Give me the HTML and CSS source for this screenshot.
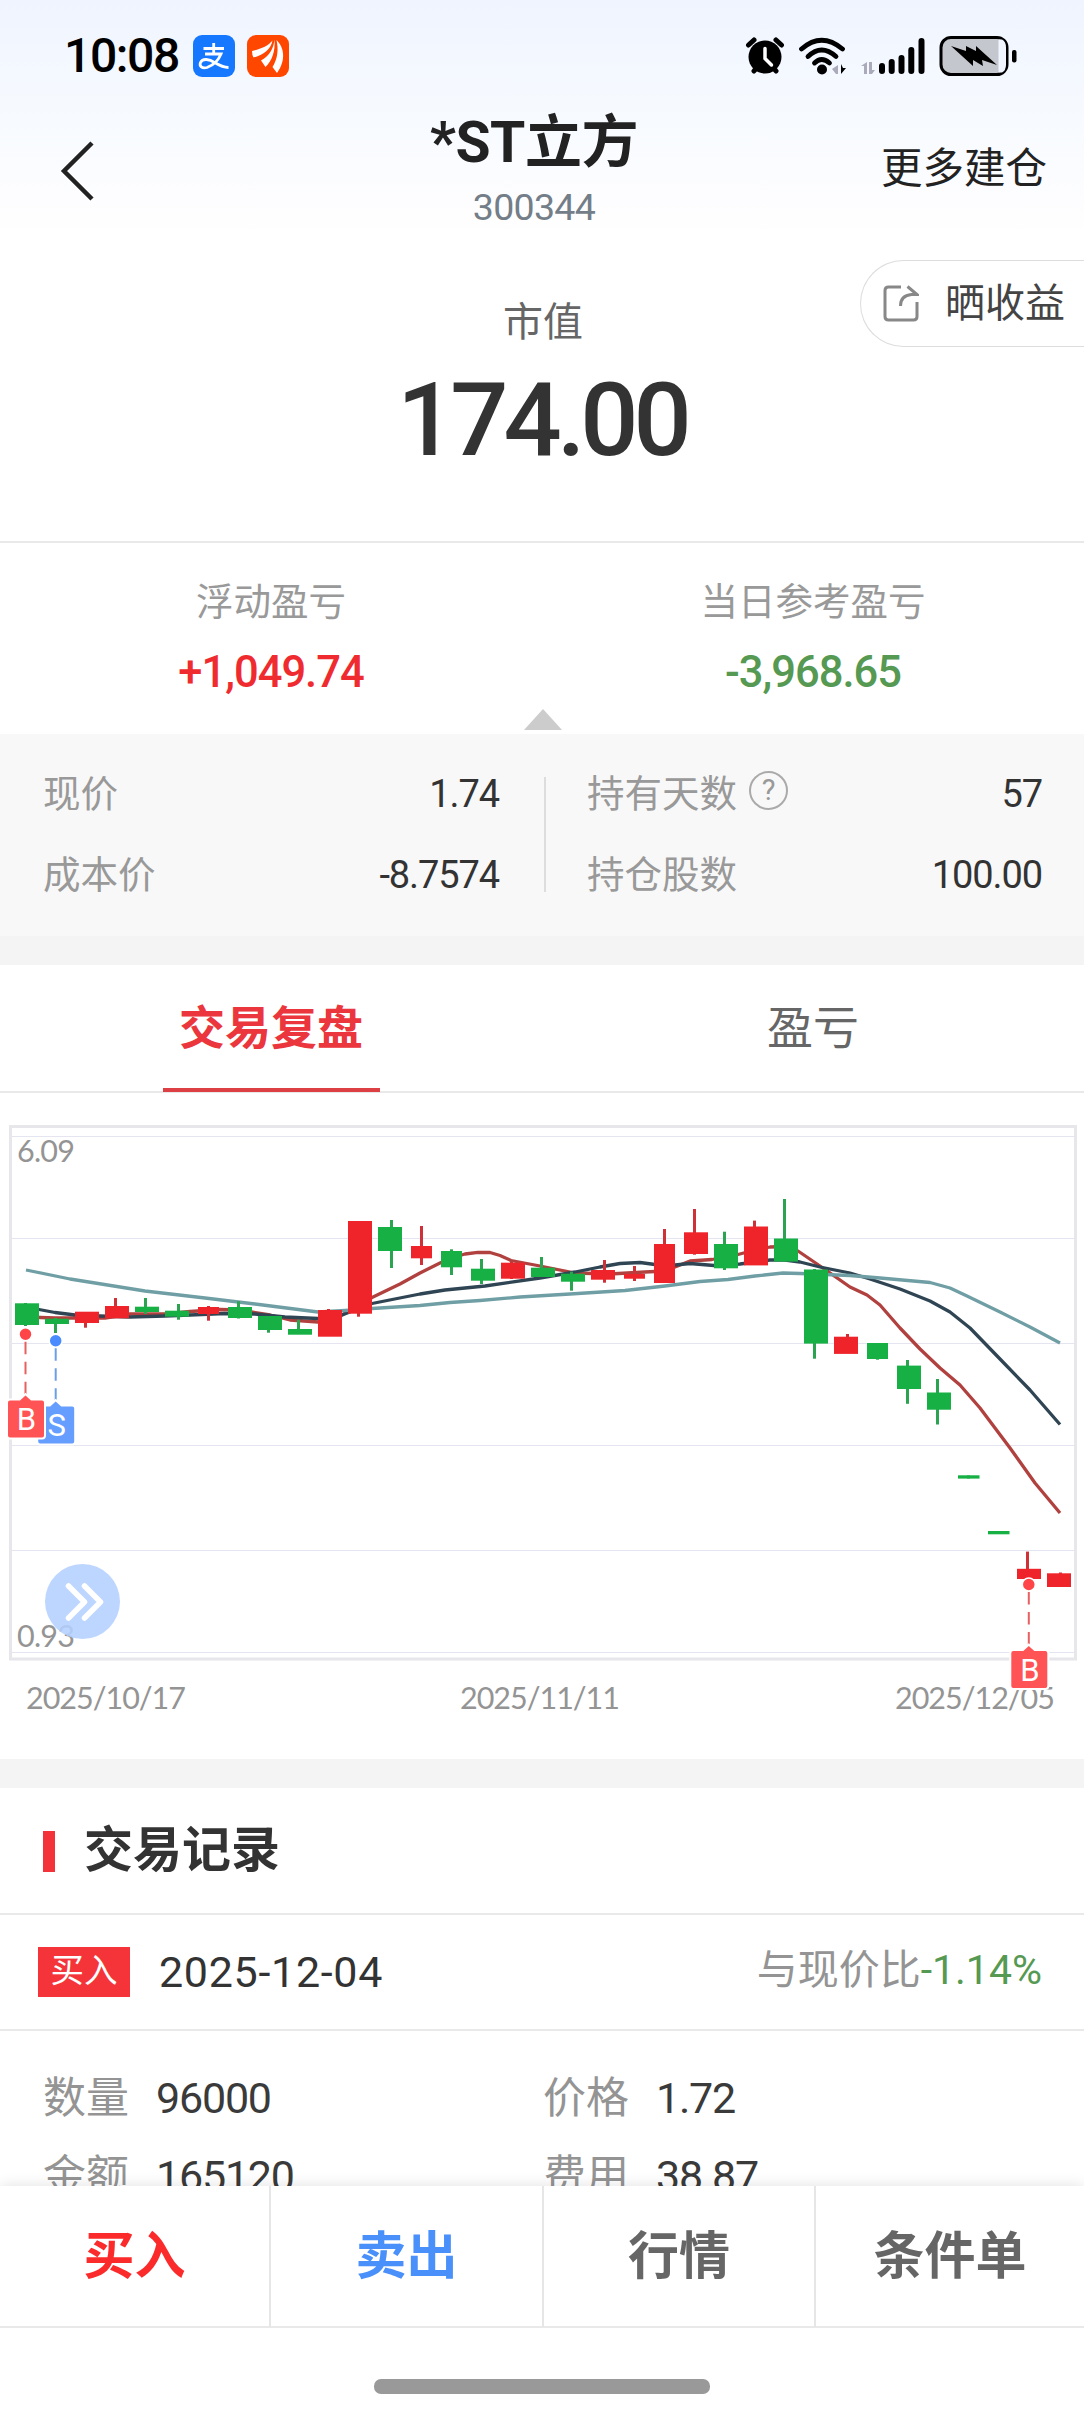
FILE: index.html
```html
<!DOCTYPE html>
<html lang="zh-CN">
<head>
    <meta charset="UTF-8">
    <meta name="viewport" content="width=device-width, initial-scale=1.0">
    <title>*ST立方 300344</title>
    <link rel="stylesheet" href="styles.css">
</head>
<body>
    <div class="screen">
        <main class="content">
            <header class="top">
                <div class="status-bar">
                    <div class="status-left">
                        <span class="clock">10:08</span>
                        <span class="app-icon alipay">
                            <svg viewBox="0 0 42 42" width="42" height="42" fill="none" stroke="#fff" stroke-width="2.8">
                                <path d="M10.500 13.500H31M20.700 8v11M12 19h16c-2 5-7 11-14 13.500-5 1.500-8-1.500-6.500-5 2-4.500 9-3.500 14 0 5 3 9 5 14 5"/>
                            </svg>
                        </span>
                        <span class="app-icon broker">
                            <svg viewBox="0 0 42 42" width="42" height="42" fill="#fff">
                                <path d="M5 16C14 14 21 11 25.500 5.500 24 14 17 20 6.500 22.500Q5 20 5 16Z"/>
                                <path d="M27.500 4.500C28.500 16 25 26 18.500 32L14 25.500C22 21 26.500 14 27.500 4.500Z"/>
                                <path d="M29.500 5C37 12 39.500 25 30 38L25.500 32C31 23 31.500 14 29.500 5Z"/>
                            </svg>
                        </span>
                    </div>
                    <svg class="status-icons" viewBox="744 32 274 48" width="274" height="48">
                        <g stroke="#000" stroke-width="5" stroke-linecap="round" fill="none">
                            <path d="M748.500 45l5.500-5M781.500 45l-5.500-5M754 71l4-5M776 71l-4-5"/>
                        </g>
                        <circle cx="765" cy="57" r="16.500"/>
                        <path d="M765 48.500v10l6.500 6.500" fill="none" stroke="#fff" stroke-width="3.500" stroke-linecap="round"/>
                        <g fill="none" stroke="#000" stroke-width="4.800" stroke-linecap="round">
                            <path d="M801.500 49Q821.500 31.500 842.500 49"/>
                            <path d="M808 56.500Q821.500 43.500 836 56.500"/>
                            <path d="M814.500 63Q821.500 56 829.500 63"/>
                        </g>
                        <circle cx="822" cy="69.500" r="5"/>
                        <path d="M838 65v9h-2l-4-5zM867 62v12h-3V66h-3z" fill="#aab"/>
                        <path d="M841 64v10l5-6h-3z"/>
                        <path d="M869 62h3v8h3l-3 4h-3z" fill="#aab"/>
                        <g stroke="#000" stroke-width="6" stroke-linecap="round">
                            <path d="M882 66v5M891.700 62v9M901.500 58v13M911.300 50v21M921.500 41v30"/>
                        </g>
                        <rect x="941" y="37.500" width="66" height="37" rx="10" fill="#c5c7ce" stroke="#000" stroke-width="3"/>
                        <path d="M998.500 39.500h3.500q4 2 4 8v17q0 6-4 8h-3.500z" fill="#f0f5ff"/>
                        <path d="M951 46l15 5v-5l10 5v-5l21 19-15-5 1 6-10-6v6z"/>
                        <rect x="1012" y="50" width="4.500" height="12.500" rx="2"/>
                    </svg>
                </div>
                <nav class="nav">
                    <svg class="back" viewBox="0 0 34 60" width="34" height="60">
                        <path d="M32 2L4 30l28 28" fill="none" stroke="#222" stroke-width="4.500"/>
                    </svg>
                    <div class="stock">
                        <h1>*ST立方</h1>
                        <p>300344</p>
                    </div>
                    <span class="more">更多建仓</span>
                </nav>
            </header>

            <section class="market">
                <p class="market-label">市值</p>
                <p class="market-value">174.00</p>
                <div class="share">
                    <svg viewBox="0 0 36 37" width="36" height="37" fill="none" stroke="#888" stroke-width="3">
                        <path d="M18 2H5.500Q2 2 2 5.500v26Q2 35 5.500 35h25q3.500 0 3.500-3.500V17"/>
                        <path d="M17.500 21q0-10.500 11-11.500h5.500L24.500 1.500"/>
                    </svg>
                    <span>晒收益</span>
                </div>
            </section>

            <section class="profit">
                <div>
                    <p class="profit-label">浮动盈亏</p>
                    <p class="profit-value red">+1,049.74</p>
                </div>
                <div>
                    <p class="profit-label">当日参考盈亏</p>
                    <p class="profit-value green">-3,968.65</p>
                </div>
                <i class="fold"></i>
            </section>

            <section class="facts">
                <dl>
                    <div><dt>现价</dt><dd>1.74</dd></div>
                    <div><dt>成本价</dt><dd>-8.7574</dd></div>
                </dl>
                <dl>
                    <div><dt>持有天数<span class="help">?</span></dt><dd>57</dd></div>
                    <div><dt>持仓股数</dt><dd>100.00</dd></div>
                </dl>
            </section>

            <div class="tabs">
                <div class="tab active"><span>交易复盘</span></div>
                <div class="tab"><span>盈亏</span></div>
            </div>

            <svg class="chart" viewBox="0 1093 1084 666" width="1084" height="666">
                <rect class="frame" x="10.500" y="1126.500" width="1065" height="532.500"/>
                <path class="grid" d="M12 1136.500H1074M12 1238.500H1074M12 1343.500H1074M12 1445.500H1074M12 1550.500H1074M12 1652.500H1074"/>
                <g id="averages"></g>
                <g id="candles"></g>
                <g class="axis">
                    <text x="17" y="1162" textLength="58">6.09</text>
                    <text x="17" y="1647" textLength="58">0.93</text>
                    <text x="26" y="1709" textLength="160">2025/10/17</text>
                    <text x="460" y="1709" textLength="160">2025/11/11</text>
                    <text x="895" y="1709" textLength="160">2025/12/05</text>
                </g>
                <g id="marks"></g>
                <g class="forward">
                    <circle cx="82.500" cy="1601.500" r="37.500"/>
                    <path d="M68.500 1586l16 16-16 16M84.500 1586l16 16-16 16"/>
                </g>
            </svg>

            <section class="records">
                <h2>交易记录</h2>
                <div class="record-head">
                    <span class="badge">买入</span>
                    <span class="date">2025-12-04</span>
                    <span class="compare">与现价比<b>-1.14%</b></span>
                </div>
                <div class="record-body">
                    <p><span>数量</span>96000</p>
                    <p><span>价格</span>1.72</p>
                    <p><span>金额</span>165120</p>
                    <p><span>费用</span>38.87</p>
                </div>
            </section>
        </main>

        <footer class="footer">
            <div class="actions">
                <span class="buy">买入</span>
                <span class="sell">卖出</span>
                <span>行情</span>
                <span>条件单</span>
            </div>
            <div class="home"><i></i></div>
        </footer>
    </div>

    <script>
        const RED = "#ee242a";
        const GREEN = "#16b044";

        // [color, left, width, body top, body bottom, wick x, wick top, wick bottom]
        const candles = [
            [GREEN, 15, 24, 1303.3, 1325, 25.5, 1303, 1326],
            [GREEN, 45, 24, 1318.7, 1324, 55.5, 1318, 1333],
            [RED, 75, 24, 1311.7, 1323, 85.5, 1312, 1327.7],
            [RED, 105, 24, 1306, 1318.3, 115.5, 1298, 1318],
            [GREEN, 135, 24, 1306.7, 1312, 145.5, 1298, 1314],
            [GREEN, 165, 24, 1310.7, 1316.7, 178.5, 1304, 1319.7],
            [RED, 198, 21, 1307, 1314, 208.5, 1306, 1320.7],
            [GREEN, 228, 24, 1307, 1318, 238.5, 1301.3, 1318.5],
            [GREEN, 258, 24, 1316, 1330, 268.5, 1316, 1332.7],
            [GREEN, 288, 24, 1329, 1334.7, 298.5, 1319.7, 1334],
            [RED, 318, 24, 1310, 1336.7, 328.5, 1309, 1336],
            [RED, 348, 24, 1221, 1313.7, 358.5, 1221, 1316.7],
            [GREEN, 378, 24, 1227, 1251, 391.5, 1220, 1268],
            [RED, 411, 21, 1246, 1258.3, 421.5, 1226, 1265],
            [GREEN, 441, 21, 1251, 1267.3, 451.5, 1249.3, 1275],
            [GREEN, 471, 24, 1268.7, 1280.7, 481.5, 1259, 1284],
            [RED, 501, 24, 1262.7, 1278.7, 511.5, 1262, 1279],
            [GREEN, 531, 24, 1267.7, 1277, 541.5, 1257, 1277],
            [GREEN, 561, 24, 1273.7, 1281.7, 571.5, 1271.7, 1290.7],
            [RED, 591, 24, 1270, 1279.7, 604.5, 1260, 1282.7],
            [RED, 624, 21, 1274, 1278.7, 634.5, 1266, 1281],
            [RED, 654, 21, 1244, 1283, 664.5, 1229, 1283],
            [RED, 684, 24, 1232.3, 1254, 694.5, 1209, 1254.7],
            [GREEN, 714, 24, 1244, 1268.3, 724.5, 1231.7, 1270],
            [RED, 744, 24, 1226.5, 1265.4, 754.5, 1220.6, 1265],
            [GREEN, 774, 24, 1238.5, 1261.6, 784.5, 1199, 1261],
            [GREEN, 804, 24, 1269.5, 1343.6, 814.5, 1269, 1358.7],
            [RED, 834, 24, 1336.7, 1353.9, 847.5, 1334, 1353],
            [GREEN, 867, 21, 1343, 1359, 877.5, 1343, 1359.7],
            [GREEN, 897, 24, 1365.6, 1389, 907.5, 1360, 1403.8],
            [GREEN, 927, 24, 1392.5, 1409.7, 937.5, 1379, 1424.5],
            [GREEN, 958, 21.5, 1475.3, 1478.6, 968.5, 1475.5, 1478.5],
            [GREEN, 988, 21.5, 1531, 1534.3, 998.5, 1531, 1534],
            [RED, 1017, 24, 1568.8, 1579, 1027.5, 1551.6, 1579],
            [RED, 1047, 24, 1573.3, 1587, 1060.5, 1572.5, 1587]
        ];

        const averages = {
            "#b0413e": [26,1317, 55,1318, 85,1318, 105,1318, 130,1314, 165,1314, 190,1311.5, 220,1309.5, 240,1310, 270,1315, 290,1320, 318,1322, 342,1315, 372,1297.5, 400,1284, 420,1273, 440,1263, 453,1257.5, 465,1254, 478,1252.3, 490,1252.5, 500,1255.5, 511,1260.5, 540,1266, 575,1273, 610,1274, 645,1272, 665,1271, 690,1261, 712,1259.5, 738,1254.5, 755,1250, 770,1247, 785,1246.5, 798,1251, 820,1266, 850,1287, 867,1295, 880,1305, 900,1328, 920,1349, 940,1368, 960,1385, 980,1408, 1010,1448, 1035,1483, 1060,1513],
            "#2f4554": [26,1307, 39,1309.5, 55,1312.5, 75,1315, 100,1316, 130,1317, 165,1316, 190,1315, 225,1313.5, 255,1314, 285,1317, 318,1318.5, 342,1315, 372,1303.5, 420,1294, 445,1290, 485,1286, 540,1278, 575,1272, 600,1267, 620,1263.5, 640,1262.5, 655,1264.5, 675,1265, 690,1263.5, 714,1265.5, 740,1264, 755,1262, 770,1260, 785,1260, 800,1262, 820,1267, 850,1273, 870,1279, 900,1289, 930,1301, 950,1312, 970,1328, 1000,1359, 1030,1390, 1060,1424.5],
            "#6f9fa5": [26,1270, 70,1279, 145,1291, 205,1298, 255,1304, 318,1312, 345,1310.5, 372,1308.5, 420,1305.5, 450,1302.5, 480,1300.5, 520,1297, 570,1294, 625,1290.5, 665,1286, 700,1281.5, 728,1279.5, 755,1276, 783,1273, 800,1273.5, 850,1275.5, 880,1278, 930,1282.5, 950,1288, 967,1296, 1000,1312, 1030,1327, 1060,1343]
        };

        // [letter, color, line color, x, dot y, box top]
        const marks = [
            ["S", "#659eff", "#6b9ee8", 55.7, 1340.7, 1406.5],
            ["B", "#ff5355", "#e8605f", 25.5, 1334.3, 1400.5],
            ["B", "#ff5355", "#e8605f", 1028.8, 1584.5, 1651]
        ];

        document.getElementById("averages").innerHTML = Object.entries(averages).map(([color, points]) =>
            `<polyline points="${points.join(" ")}" fill="none" stroke="${color}" stroke-width="3.3" stroke-linejoin="round"/>`
        ).join("");

        document.getElementById("candles").innerHTML = candles.map(([color, x, w, top, bottom, wx, wTop, wBottom]) =>
            `<rect x="${wx - 1.5}" y="${wTop}" width="3" height="${wBottom - wTop}" fill="${color === RED ? "#cc3238" : "#2ca350"}"/>
             <rect x="${x}" y="${top}" width="${w}" height="${bottom - top}" fill="${color}"/>`
        ).join("");

        document.getElementById("marks").innerHTML = marks.map(([letter, color, line, x, dot, box]) =>
            `<circle cx="${x}" cy="${dot}" r="6.5" fill="${letter === "S" ? "#4a8bff" : "#ff4547"}" stroke="#fff" stroke-width="1.5"/>
             <path d="M${x} ${dot + 7.5}V${box - 6}" stroke="${line}" stroke-width="2" stroke-dasharray="12.5 7.5"/>
             <path d="M${x - 15.5} ${box}h10l5.5-5 5.5 5h11q2 0 2 2v33q0 2-2 2h-32q-2 0-2-2v-33q0-2 2-2z" fill="${color}" stroke="#fff" stroke-width="4" paint-order="stroke"/>
             <text x="${x + 1}" y="${box + 29.5}" class="mark">${letter}</text>`
        ).join("");
    </script>
</body>
</html>
```

FILE: styles.css
```css
* {
    box-sizing: border-box;
    margin: 0;
    padding: 0;
}

body {
    font-family: Roboto, "Noto Sans CJK SC", sans-serif;
    background-color: #fff;
    color: #333;
}

.screen {
    display: flex;
    flex-direction: column;
    width: 1084px;
    height: 2412px;
    overflow: hidden;
}

.content {
    height: 2186px;
    overflow: hidden;
}

.top {
    height: 236px;
    background: linear-gradient(#f0f4ff, #f6faff 45%, #fdfdff 85%, #fff);
}

.status-bar {
    display: flex;
    justify-content: space-between;
    align-items: center;
    height: 106px;
    padding: 6px 66px 0 64px;
}

.status-left {
    display: flex;
    align-items: center;
}

.clock {
    width: 129px;
    font-size: 48px;
    line-height: 60px;
    font-weight: 500;
    letter-spacing: -1.4px;
    color: #000;
}

.app-icon {
    width: 42px;
    height: 42px;
    margin-right: 12px;
    border-radius: 9px;
}

.app-icon svg {
    display: block;
}

.alipay {
    background-color: #1677ff;
}

.broker {
    background-color: #ff4700;
}

.nav {
    display: flex;
    height: 130px;
    padding: 0 37px 0 60px;
}

.back {
    margin-top: 35px;
}

.stock {
    flex: 1;
    padding-left: 93px;
    text-align: center;
}

.stock h1 {
    font-size: 57px;
    line-height: 73px;
    font-weight: 700;
    letter-spacing: -0.5px;
    color: #222;
}

.stock p {
    font-size: 37.500px;
    line-height: 57px;
    letter-spacing: -0.7px;
    color: #737e88;
}

.more {
    font-size: 41.500px;
    line-height: 125px;
    color: #222;
}

.market {
    position: relative;
    height: 307px;
    padding-top: 57px;
    border-bottom: 2px solid #e9e9e9;
    text-align: center;
}

.market-label {
    font-size: 40px;
    line-height: 60px;
    padding-left: 2px;
    color: #666;
}

.market-value {
    font-size: 102.500px;
    line-height: 134px;
    font-weight: 500;
    letter-spacing: -5px;
    color: #333;
}

.share {
    position: absolute;
    top: 24px;
    right: 0;
    display: flex;
    align-items: center;
    gap: 26px;
    width: 224px;
    height: 87px;
    padding-left: 22px;
    border: 1px solid #ddd;
    border-right: none;
    border-radius: 44px 0 0 44px;
    font-size: 40px;
    line-height: 60px;
    color: #444;
}

.profit {
    position: relative;
    display: grid;
    grid-template-columns: 1fr 1fr;
    height: 191px;
    padding-top: 29px;
    text-align: center;
}

.profit-label {
    font-size: 37.500px;
    line-height: 60px;
    color: #999;
}

.profit-value {
    font-size: 43.500px;
    line-height: 81px;
    font-weight: 500;
    letter-spacing: -1px;
}

.red {
    color: #ef2b30;
}

.green {
    color: #559953;
}

.fold {
    position: absolute;
    left: 524px;
    bottom: 4px;
    border: 19px solid transparent;
    border-top: none;
    border-bottom: 21px solid #ccc;
}

.facts {
    display: grid;
    grid-template-columns: 544px 540px;
    height: 231px;
    padding-top: 19px;
    background-color: #f8f8f8;
    border-bottom: 29px solid #f4f4f4;
    background-image: linear-gradient(#ddd, #ddd);
    background-size: 2px 115px;
    background-position: 544px 43px;
    background-repeat: no-repeat;
}

.facts dl {
    padding: 0 45px 0 43px;
    font-size: 37.500px;
}

.facts dl + dl {
    padding: 0 42px 0 43px;
}

.facts dl div {
    display: flex;
    justify-content: space-between;
    height: 81px;
    line-height: 82px;
}

.facts dt {
    display: flex;
    align-items: center;
    color: #999;
}

.facts dd {
    font-size: 38px;
    line-height: 83px;
    letter-spacing: -1.1px;
}

.help {
    width: 39px;
    height: 39px;
    margin: -6px 0 0 12px;
    border: 2.500px solid #aaa;
    border-radius: 50%;
    font-size: 29px;
    line-height: 35px;
    text-align: center;
}

.tabs {
    display: grid;
    grid-template-columns: 1fr 1fr;
    height: 128px;
    border-bottom: 2px solid #e9e9e9;
    text-align: center;
    font-size: 46px;
    line-height: 127px;
    color: #666;
}

.tab.active {
    width: 217px;
    height: 127px;
    justify-self: center;
    font-weight: 700;
    color: #ea363c;
    border-bottom: 4px solid #dc4045;
}

.chart {
    display: block;
}

.frame {
    fill: none;
    stroke: #e6e6eb;
    stroke-width: 3;
}

.grid {
    stroke: #e4e5f0;
    stroke-width: 1;
}

.axis {
    font-family: Lato, Roboto, sans-serif;
    font-size: 30.500px;
    fill: #949494;
}

.mark {
    font-size: 31px;
    fill: #fff;
    text-anchor: middle;
}

.forward circle {
    fill: #b4d0ff;
    fill-opacity: 0.88;
}

.forward path {
    fill: none;
    stroke: #fff;
    stroke-width: 5.500;
    stroke-linecap: round;
    stroke-linejoin: round;
}

.records {
    border-top: 29px solid #f4f4f4;
}

.records h2 {
    display: flex;
    align-items: center;
    height: 127px;
    padding-left: 43px;
    border-bottom: 2px solid #e9e9e9;
    font-size: 49px;
    line-height: 120px;
    font-weight: 700;
}

.records h2::before {
    content: "";
    width: 12px;
    height: 41px;
    margin: 1px 29px 0 0;
    background-color: #f2343a;
}

.record-head {
    display: flex;
    align-items: center;
    height: 116px;
    padding: 0 42px 0 38px;
    border-bottom: 2px solid #e9e9e9;
}

.badge {
    width: 92px;
    height: 50px;
    margin-right: 29px;
    background-color: #f5343a;
    font-size: 33.500px;
    line-height: 48px;
    text-align: center;
    color: #fff;
}

.date {
    font-size: 43px;
    letter-spacing: 0.7px;
}

.compare {
    margin-left: auto;
    font-size: 41px;
    line-height: 110px;
    height: 114px;
    color: #949494;
}

.compare b {
    font-weight: 400;
    color: #559953;
}

.record-body {
    display: grid;
    grid-template-columns: 500px 1fr;
    padding: 28px 43px;
    font-size: 43px;
    line-height: 78px;
}

.record-body p {
    letter-spacing: -1.2px;
    color: #3a3a3a;
}

.record-body span {
    margin-right: 27px;
    letter-spacing: 0;
    color: #949494;
}

.footer {
    position: relative;
    height: 226px;
    background-color: #fff;
    box-shadow: 0 0 14px rgba(0, 0, 0, 0.12);
}

.actions {
    display: grid;
    grid-template-columns: 271px 273px 272px 268px;
    height: 142px;
    border-bottom: 2px solid #e9e9e9;
}

.actions span {
    border-right: 2px solid #e6e6e6;
    font-size: 51px;
    line-height: 141px;
    font-weight: 700;
    text-align: center;
    color: #666;
}

.actions span:last-child {
    border-right: none;
}

.actions .buy {
    color: #fb2b2b;
}

.actions .sell {
    color: #4a90fa;
}

.home {
    display: flex;
    justify-content: center;
    padding-top: 51px;
}

.home i {
    width: 336px;
    height: 15px;
    border-radius: 7px;
    background-color: #999;
}
```
